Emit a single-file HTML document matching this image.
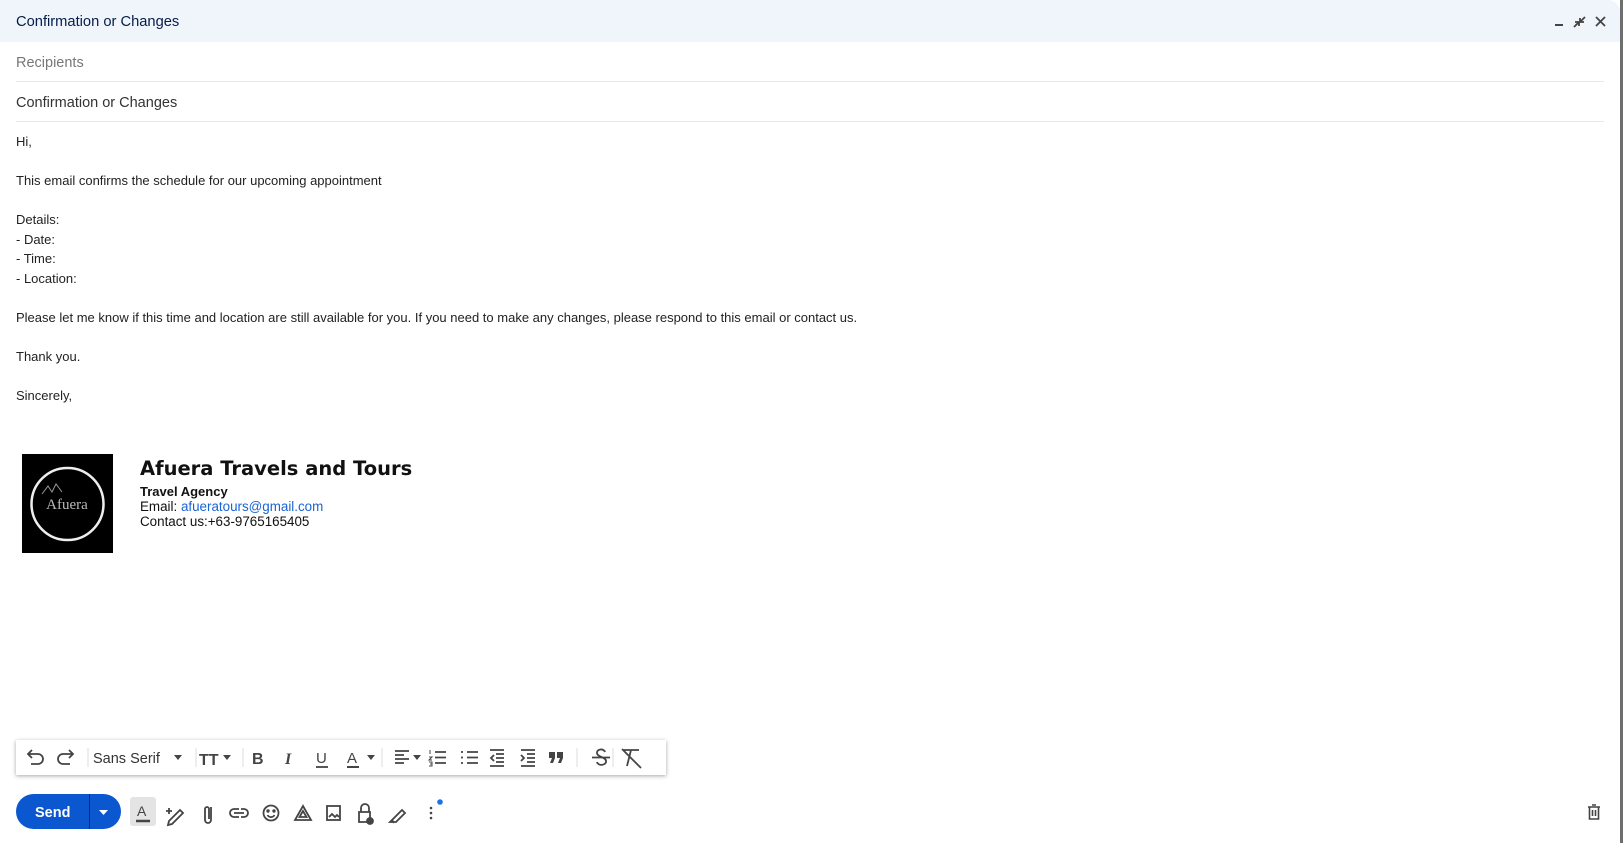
<!DOCTYPE html>
<html><head><meta charset="utf-8"><style>
*{margin:0;padding:0;box-sizing:border-box}
body{width:1623px;height:843px;overflow:hidden;background:#fff;font-family:"Liberation Sans",Arial,sans-serif;position:relative}
.a{position:absolute;white-space:nowrap}
.win{position:absolute;left:0;top:0;width:1620px;height:843px;background:#fff;border-top-right-radius:12px;overflow:hidden}
.edge{position:absolute;left:1620px;top:0;width:3px;height:843px;background:#6e6e6e}
.tb{position:absolute;left:0;top:0;width:1620px;height:42px;background:#f0f4fb}
.line{position:absolute;left:16px;width:1588px;height:1px;background:#e8e8e8}
.body{font-size:13px;color:#222}
.ic{position:absolute}
svg{display:block}
</style></head><body>
<div class="win">
<div class="tb"></div>
<div class="a" style="left:16px;top:14px;font-size:14.7px;color:#041e49">Confirmation or Changes</div>
<svg class="ic" style="left:1552px;top:14px" width="60" height="16" viewBox="0 0 60 16">
<rect x="3" y="10" width="8" height="2" fill="#444"/>
<path d="M22 13 L27 8 M23 8 H27 V12 M33 3 L28 8 M28 4 V8 H32" stroke="#444" stroke-width="1.8" fill="none"/>
<path d="M44 3 L53 12 M53 3 L44 12" stroke="#444" stroke-width="1.8"/>
</svg>
<div class="a" style="left:16px;top:55px;font-size:14.5px;color:#777">Recipients</div>
<div class="line" style="top:81px"></div>
<div class="a" style="left:16px;top:95px;font-size:14.5px;color:#333">Confirmation or Changes</div>
<div class="line" style="top:121px"></div>
<div class="body">
<div class="a" style="left:16px;top:134px">Hi,</div>
<div class="a" style="left:16px;top:173px">This email confirms the schedule for our upcoming appointment</div>
<div class="a" style="left:16px;top:212px">Details:</div>
<div class="a" style="left:16px;top:232px">- Date:</div>
<div class="a" style="left:16px;top:251px">- Time:</div>
<div class="a" style="left:16px;top:271px">- Location:</div>
<div class="a" style="left:16px;top:310px">Please let me know if this time and location are still available for you. If you need to make any changes, please respond to this email or contact us.</div>
<div class="a" style="left:16px;top:349px">Thank you.</div>
<div class="a" style="left:16px;top:388px">Sincerely,</div>
</div>
<div class="a" style="left:22px;top:454px;width:91px;height:99px;background:#000">
<svg width="91" height="99" viewBox="0 0 91 99"><circle cx="45.5" cy="50" r="36" stroke="#eee" stroke-width="2.5" fill="none"/>
<text x="45" y="55" fill="#bbb" font-size="15" text-anchor="middle" font-family="Liberation Serif">Afuera</text>
<path d="M20 40 L26 32 L30 38 L34 30 L40 38" stroke="#999" fill="none"/></svg></div>
<div class="a" style="left:140px;top:457px;font-size:19.5px;font-weight:bold;font-family:'DejaVu Sans',sans-serif;color:#111">Afuera Travels and Tours</div>
<div class="a" style="left:140px;top:484px;font-size:13px;font-weight:bold;color:#111">Travel Agency</div>
<div class="a" style="left:140px;top:499px;font-size:13.4px;color:#111">Email: <span style="color:#1a63d6">afueratours@gmail.com</span></div>
<div class="a" style="left:140px;top:514px;font-size:13.4px;color:#111">Contact us:+63-9765165405</div>

<div class="a" style="left:16px;top:740px;width:650px;height:35px;background:#fff;box-shadow:0 1px 4px rgba(0,0,0,.35)"></div>
<svg class="ic" style="left:16px;top:740px" width="650" height="35" viewBox="0 0 650 35" fill="none" stroke="#444" stroke-width="1.8">
<path d="M13 14 H22 A5 5 0 0 1 22 24 H15 M16 10 L12 14 L16 18"/>
<path d="M56 14 H47 A5 5 0 0 0 47 24 H54 M53 10 L57 14 L53 18"/>
<line x1="72" y1="8" x2="72" y2="27" stroke="#ddd" stroke-width="1"/>
<text x="77" y="23" font-size="14.5" fill="#333" stroke="none" font-family="Liberation Sans">Sans Serif</text>
<path d="M158 15 L166 15 L162 20Z" fill="#444" stroke="none"/>
<line x1="180" y1="8" x2="180" y2="27" stroke="#ddd" stroke-width="1"/>
<text x="183" y="25" font-size="16" font-weight="bold" fill="#444" stroke="none" font-family="Liberation Sans">TT</text>
<path d="M207 15 L215 15 L211 20Z" fill="#444" stroke="none"/>
<line x1="227" y1="8" x2="227" y2="27" stroke="#ddd" stroke-width="1"/>
<text x="236" y="24" font-size="16" font-weight="bold" fill="#444" stroke="none" font-family="Liberation Sans">B</text>
<text x="269" y="24" font-size="16" font-style="italic" fill="#444" stroke="none" font-family="Liberation Serif" font-weight="bold">I</text>
<text x="300" y="23" font-size="15" fill="#444" stroke="none" font-family="Liberation Sans">U</text><line x1="300" y1="27" x2="312" y2="27"/>
<text x="331" y="23" font-size="15" fill="#444" stroke="none" font-family="Liberation Sans">A</text><line x1="331" y1="27" x2="343" y2="27" stroke-width="2"/>
<path d="M351 15 L359 15 L355 20Z" fill="#444" stroke="none"/>
<line x1="366" y1="8" x2="366" y2="27" stroke="#ddd" stroke-width="1"/>
<path d="M379 11 H393 M379 15 H388 M379 19 H393 M379 23 H388"/>
<path d="M397 15 L405 15 L401 20Z" fill="#444" stroke="none"/>
<path d="M419 12 H430 M419 17.5 H430 M419 23 H430" /><path d="M414 10 V14 M413 17 H416 L413 20 H416 M413 22 H416 V26 H413 M414 24 H416" stroke-width="1"/>
<path d="M451 12 H462 M451 17.5 H462 M451 23 H462 M445 12 H447 M445 17.5 H447 M445 23 H447"/>
<path d="M474 10 H488 M480 14 H488 M480 18 H488 M480 22 H488 M474 26 H488 M478 15 L475 18 L478 21"/>
<path d="M505 10 H519 M511 14 H519 M511 18 H519 M511 22 H519 M505 26 H519 M505 15 L508 18 L505 21"/>
<path d="M533 12 H539 V18 L537 23 H534 L536 18 H533Z M541 12 H547 V18 L545 23 H542 L544 18 H541Z" fill="#444" stroke="none"/>
<line x1="561" y1="8" x2="561" y2="27" stroke="#ddd" stroke-width="1"/>
<path d="M589 12 A4 3 0 0 0 581 13 C581 17 590 17 590 21 A4 3 0 0 1 581 22 M576 17.5 H594"/>
<line x1="597" y1="8" x2="597" y2="27" stroke="#ddd" stroke-width="1"/>
<path d="M607 10 H623 M615 10 L611 26 M606 9 L625 28"/>
</svg>

<div class="a" style="left:16px;top:794px;width:105px;height:35px;background:#0b57d0;border-radius:18px"></div>
<div class="a" style="left:89px;top:794px;width:1px;height:35px;background:#052c6b"></div>
<div class="a" style="left:35px;top:805px;font-size:14.5px;font-weight:bold;color:#fff">Send</div>
<svg class="ic" style="left:98px;top:809px" width="12" height="8"><path d="M1 1 H10 L5.5 6Z" fill="#fff"/></svg>
<div class="a" style="left:130px;top:797px;width:26px;height:29px;background:#e4e4e4;border-radius:3px"></div>
<svg class="ic" style="left:130px;top:797px" width="330" height="32" viewBox="0 0 330 32" fill="none" stroke="#444" stroke-width="1.8">
<text x="7" y="19" font-size="14" fill="#444" stroke="none" font-family="Liberation Sans">A</text><line x1="6" y1="24" x2="20" y2="24" stroke-width="2.5"/>
<path d="M39 24 L50 13 L53 16 L42 27 L38 28Z M39 11 V17 M36 14 H42"/>
<path d="M81 10 V23 A3 3 0 0 1 75 23 V12 A2 2 0 0 1 79 12 V22"/>
<path d="M104 16 H114 M109 12 H104 A4 4 0 0 0 104 20 H109 M111 12 H114 A4 4 0 0 1 114 20 H111"/>
<circle cx="141" cy="16" r="7.5"/><circle cx="138" cy="14" r=".8" fill="#444"/><circle cx="144" cy="14" r=".8" fill="#444"/><path d="M137.5 18 A4 4 0 0 0 144.5 18"/>
<path d="M173 9 L165 23 H181Z M173 14 L169.5 20 H176.5Z"/>
<rect x="197" y="9" width="13" height="14"/><path d="M199 20 L202 17 L205 20 L207 18 L209 20" />
<path d="M231 15 V11 A4 4 0 0 1 239 11 V15 M229 15 H240 V25 H229Z"/><circle cx="240" cy="24" r="3" fill="#444"/>
<path d="M260 25 L263 22 L272 13 L275 16 L266 25Z M262 23 L264 26"/>
<circle cx="301" cy="11" r="1.3" fill="#444" stroke="none"/><circle cx="301" cy="16" r="1.3" fill="#444" stroke="none"/><circle cx="301" cy="21" r="1.3" fill="#444" stroke="none"/>
<circle cx="310" cy="5" r="2.8" fill="#1a73e8" stroke="none"/>
</svg>
<svg class="ic" style="left:1587px;top:804px" width="14" height="16" viewBox="0 0 14 16" fill="none" stroke="#444" stroke-width="1.6"><path d="M1 3 H13 M5 1 H9 M2.5 3 V15 H11.5 V3 M5.5 6 V12 M8.5 6 V12"/></svg>
</div>
<div class="edge"></div>
</body></html>
